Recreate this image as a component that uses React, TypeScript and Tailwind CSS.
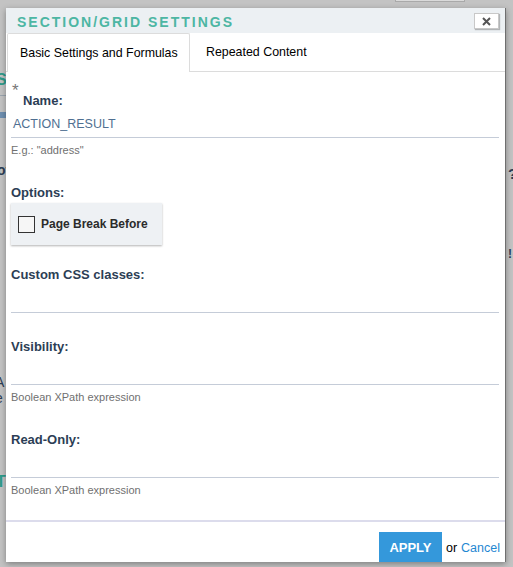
import React from "react";

const labelCls = "text-[13px] font-bold leading-[16px] text-[#2c3e55]";
const hintCls = "text-[11px] leading-[24px] text-[#707070]";

const Field: React.FC<{ label: string; hint?: string; mt: string }> = ({ label, hint, mt }) => (
  <div>
    <div className={`${labelCls} ${mt}`}>{label}</div>
    <div className="h-[30px] border-b border-[#c5ccd8]"></div>
    {hint && <div className={hintCls}>{hint}</div>}
  </div>
);

export default function App() {
  return (
    <div className="relative w-[513px] h-[567px] overflow-hidden bg-[#c3c3c3] pt-[8px] pl-[6px] font-['Liberation_Sans',Arial,sans-serif]">
      {/* bits of the page behind the dialog */}
      <div className="absolute left-[-4px] top-[68px] text-[16px] font-bold text-[#2f9b8a]">S</div>
      <div className="absolute left-0 top-[95px] w-[8px] border-t border-[#9aa4ae]"></div>
      <div className="absolute left-0 top-[112px] w-[8px] h-[6px] bg-[#6e8fb0]"></div>
      <div className="absolute left-[-3px] top-[160px] text-[14px] font-bold text-[#2c3e55]">of</div>
      <div className="absolute left-[-5px] top-[372px] text-[14px] text-[#2c3e55]">A</div>
      <div className="absolute left-[-5px] top-[388px] text-[14px] text-[#2c3e55]">e</div>
      <div className="absolute left-[-4px] top-[470px] text-[16px] font-bold text-[#2f9b8a]">T</div>
      <div className="absolute left-[395px] top-[-8px] w-[70px] h-[10px] bg-[#dadada] border border-[#a9a9a9]"></div>
      <div className="absolute left-[508px] top-[163px] text-[15px] font-bold text-[#2c3e55]">?</div>
      <div className="absolute left-[508px] top-[245px] text-[12px] font-bold text-[#2c3e55]">!</div>

      <div className="relative w-[500px] h-[554px] bg-white border-r border-[#6f6f6f] shadow-[0_2px_6px_rgba(0,0,0,0.35)] overflow-hidden">
        {/* title bar */}
        <div className="flex h-[25px] items-center justify-between bg-[#ecf0f3] pl-[11px] pr-[6px]">
          <span className="pt-[3px] text-[14px] font-bold tracking-[2px] text-[#4db6a3]">SECTION/GRID SETTINGS</span>
          <button className="mt-[1px] flex h-[16px] w-[25px] items-center justify-center border border-[#c8c8c8] bg-white shadow-[1px_1px_1px_rgba(0,0,0,0.25)]">
            <svg width="9" height="9" viewBox="0 0 9 9">
              <path d="M1 1L8 8M8 1L1 8" stroke="#555" strokeWidth="2" />
            </svg>
          </button>
        </div>

        {/* tabs */}
        <div className="flex h-[39px] items-end border-b border-[#dcdcdc] pl-[1px]">
          <div className="mb-[-1px] flex h-[39px] w-[183px] items-center border border-b-0 border-[#dcdcdc] bg-white pl-[12px] pt-[1px] text-[12.4px] text-black rounded-t-[2px]">
            Basic Settings and Formulas
          </div>
          <div className="flex h-[38px] items-center pl-[16px] pt-[1px] text-[12.4px] text-black">Repeated Content</div>
        </div>

        {/* form */}
        <div className="pl-[5px] pr-[6px]">
          <div className="h-[21px] pl-[1px] pt-[10px] text-[17px] leading-[17px] text-[#777]">*</div>
          <div className={`${labelCls} pl-[12px]`}>Name:</div>
          <div className="h-[29px] border-b border-[#c5ccd8] pl-[2px] pt-[7px] text-[12.5px] leading-[16px] text-[#4f6f91]">
            ACTION_RESULT
          </div>
          <div className={hintCls}>E.g.: "address"</div>

          <div className={`${labelCls} mt-[23px]`}>Options:</div>
          <label className="mt-[2px] flex h-[42px] w-[151px] items-center gap-[6px] bg-[#eef1f4] pl-[7px] shadow-[0_1px_2px_rgba(0,0,0,0.3)]">
            <span className="h-[17px] w-[17px] border border-[#333] bg-[#f6f6f6]"></span>
            <span className="text-[12px] font-bold text-[#2b2b2b]">Page Break Before</span>
          </label>

          <Field label="Custom CSS classes:" mt="mt-[22px]" />
          <Field label="Visibility:" hint="Boolean XPath expression" mt="mt-[26px]" />
          <Field label="Read-Only:" hint="Boolean XPath expression" mt="mt-[23px]" />
        </div>

        <div className="mt-[18px] border-t-2 border-[#dcdcec]"></div>

        {/* footer */}
        <div className="flex items-start justify-end gap-[4px] pr-[5px] pt-[10px] text-[12.5px]">
          <button className="h-[31px] w-[63px] bg-[#3498db] text-[13px] font-bold text-white">APPLY</button>
          <span className="pt-[7px] text-black">or</span>
          <a className="pt-[7px] text-[#1f88d2]">Cancel</a>
        </div>
      </div>
    </div>
  );
}
